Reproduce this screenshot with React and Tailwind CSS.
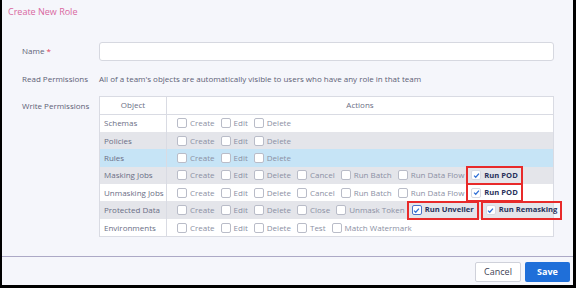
import React from 'react';

const rows = [
  { name: 'Schemas', bg: 'bg-white', actions: ['Create', 'Edit', 'Delete'] },
  { name: 'Policies', bg: 'bg-[#e4e5ea]', actions: ['Create', 'Edit', 'Delete'] },
  { name: 'Rules', bg: 'bg-[#c6e4f6]', actions: ['Create', 'Edit', 'Delete'] },
  { name: 'Masking Jobs', bg: 'bg-[#e4e5ea]', actions: ['Create', 'Edit', 'Delete', 'Cancel', 'Run Batch', 'Run Data Flow'], checked: ['Run POD'] },
  { name: 'Unmasking Jobs', bg: 'bg-white', actions: ['Create', 'Edit', 'Delete', 'Cancel', 'Run Batch', 'Run Data Flow'], checked: ['Run POD'] },
  { name: 'Protected Data', bg: 'bg-[#e4e5ea]', actions: ['Create', 'Edit', 'Delete', 'Close', 'Unmask Token'], checked: ['Run Unveiler', 'Run Remasking'] },
  { name: 'Environments', bg: 'bg-white', actions: ['Create', 'Edit', 'Delete', 'Test', 'Match Watermark'] },
];

function Box({ checked, focus }) {
  return (
    <span
      className={`flex items-center justify-center w-[10px] h-[10px] rounded-[2px] bg-white border ${
        focus ? 'border-[#4a73c9]' : checked ? 'border-[#d8dae2]' : 'border-[#b9bcc8]'
      }`}
    >
      {checked && (
        <svg width="7" height="7" viewBox="0 0 8 8">
          <path d="M1.2 4.2 L3.1 6 L6.8 1.8" fill="none" stroke="#2f6fd6" strokeWidth="1.4" />
        </svg>
      )}
    </span>
  );
}

function Action({ label }) {
  return (
    <span className="flex items-center gap-[3px] mr-[6px]">
      <Box />
      <span className="text-[#8b90a4]">{label}</span>
    </span>
  );
}

function Checked({ label, focus, first }) {
  return (
    <span
      className={`flex items-center gap-[3px] h-[19px] px-[3px] border-2 border-[#e82a2a] ${
        first ? '-ml-[4px]' : 'ml-[2px]'
      }`}
    >
      <Box checked focus={focus} />
      <span className="font-bold text-[7.6px] text-[#27315a]">{label}</span>
    </span>
  );
}

export default function App() {
  return (
    <div className="w-[576px] h-[288px] bg-black" style={{ fontFamily: '"Open Sans", sans-serif' }}>
      <div className="ml-[2px] w-[571px] h-[285px] bg-[#f5f6fb] flex flex-col">
        <div className="pl-[6px] pt-[5px] text-[9px] text-[#d9679f]">Create New Role</div>

        <div className="flex items-center mt-[23px] text-[8px] text-[#5d6176]">
          <div className="w-[97px] shrink-0 pl-[20px]">
            Name <span className="text-[#e0405a]">*</span>
          </div>
          <div className="w-[455px] h-[19px] bg-white border border-[#d6d8e0] rounded-[3px]" />
        </div>

        <div className="flex items-center mt-[12px] text-[8px] text-[#5d6176]">
          <div className="w-[97px] shrink-0 pl-[20px]">Read Permissions</div>
          <div>All of a team's objects are automatically visible to users who have any role in that team</div>
        </div>

        <div className="flex mt-[11px] text-[8px] text-[#5d6176]">
          <div className="w-[97px] shrink-0 pl-[20px] pt-[4px]">Write Permissions</div>
          <div className="w-[455px] shrink-0 border border-[#d9dbe3] bg-white">
            <div className="flex h-[18px] items-center border-b border-[#d9dbe3] text-[#6a6e85]">
              <div className="w-[67px] shrink-0 text-center border-r border-[#d9dbe3] h-full flex items-center justify-center">Object</div>
              <div className="flex-1 text-center">Actions</div>
            </div>
            {rows.map((r) => (
              <div key={r.name} className={`flex h-[17.4px] items-center ${r.bg}`}>
                <div className="w-[67px] shrink-0 pl-[4px] border-r border-[#d9dbe3] h-full flex items-center text-[#6a6e85] whitespace-nowrap">
                  {r.name}
                </div>
                <div className="flex items-center pl-[10px] whitespace-nowrap">
                  {r.actions.map((a) => (
                    <Action key={a} label={a} />
                  ))}
                  {r.checked &&
                    r.checked.map((c, j) => (
                      <Checked key={c} label={c} first={j === 0} focus={r.name === 'Protected Data' && j === 0} />
                    ))}
                </div>
              </div>
            ))}
          </div>
        </div>

        <div className="mt-auto border-t-[1.5px] border-[#aca9c6] flex justify-end gap-[4px] pt-[5px] pb-[3px] pr-[3px]">
          <button className="w-[46px] h-[20px] bg-white border border-[#cfd1da] rounded-[2px] text-[9px] text-[#3d4255]">
            Cancel
          </button>
          <button className="w-[45px] h-[20px] bg-[#1f6fd9] rounded-[2px] text-[9px] font-bold text-white">
            Save
          </button>
        </div>
      </div>
    </div>
  );
}
